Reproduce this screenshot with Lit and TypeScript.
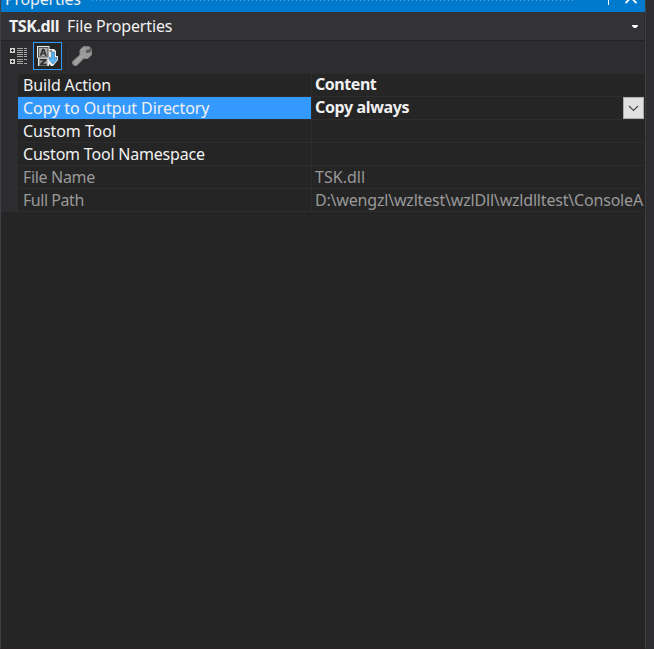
import { LitElement, html, css } from "lit";
import { customElement } from "lit/decorators.js";
import { classMap } from "lit/directives/class-map.js";
import { styleMap } from "lit/directives/style-map.js";

interface Row {
  name: string;
  value: string;
  bold?: boolean;
  selected?: boolean;
  readonly?: boolean;
  tracking: number;
  valueTracking?: number;
}

const rows: Row[] = [
  { name: "Build Action", value: "Content", bold: true, tracking: -0.16, valueTracking: -0.45 },
  { name: "Copy to Output Directory", value: "Copy always", bold: true, selected: true, tracking: -0.07, valueTracking: -0.36 },
  { name: "Custom Tool", value: "", tracking: -0.05 },
  { name: "Custom Tool Namespace", value: "", tracking: -0.2 },
  { name: "File Name", value: "TSK.dll", readonly: true, tracking: -0.33, valueTracking: 0.03 },
  { name: "Full Path", value: "D:\\wengzl\\wzltest\\wzlDll\\wzldlltest\\ConsoleA", readonly: true, tracking: -0.45, valueTracking: -0.19 },
];

const categorizedIcon = html`<svg class="categorized" width="18" height="18" viewBox="0 0 18 18" shape-rendering="crispEdges">
  <path fill="#d4d4d4" d="M0 1h5v5H0zM0 12h5v5H0z"/>
  <path fill="#2d2d30" d="M1 3h3v1H1zM2 2h1v3H2zM1 14h3v1H1zM2 13h1v3H2z"/>
  <path fill="#a6a6a6" d="M7 1h6v1H7zM7 3h6v1H7zM7 5h6v1H7zM7 7h6v1H7zM7 9h6v1H7zM7 12h6v1H7zM7 14h6v1H7zM7 16h6v1H7zM14 1h3v1h-3zM14 3h3v1h-3zM14 5h3v1h-3zM14 7h3v1h-3zM14 9h3v1h-3zM14 12h3v1h-3zM14 16h3v1h-3z"/>
</svg>`;

const alphabeticalIcon = html`<svg width="21" height="21" viewBox="0 0 21 21">
  <path fill="#ececec" d="M0 0h12.5v3H17l2 2v5h2v4l-5 6h-2l-2-2v2H1v-8H0z"/>
  <path fill="#555" d="M1 1h10.5v10.5H1z"/>
  <path fill="#a9a9a9" d="M2 2h8.5v8.5H2z"/>
  <path fill="#303030" fill-rule="evenodd" d="M5.2 2.8h2.1L9.8 9.7H7.9L7.4 8.3H5L4.5 9.7H2.7zM5.5 6.9h1.5l-.8-2.2z"/>
  <path fill="#9a9a9a" d="M2 12.5h8.5V20H2z"/>
  <path fill="#303030" d="M3 13h6.5v1.4l-3.7 3.4h3.9v1.6H2.8V18l3.7-3.4H3z"/>
  <path fill="#252526" d="M12.5 4.5H15v1h-2.5z"/>
  <path fill="#5bb8f5" stroke="#2f7db2" stroke-width=".7" d="M14.6 6h2.8v6.6l2.4-1.4v2.3L16 18l-3.8-4.5v-2.3l2.4 1.4z"/>
</svg>`;

const wrenchIcon = html`<svg class="wrench" width="21" height="21" viewBox="0 0 21 21">
  <path fill="#9b9b9b" stroke="#858585" d="M11.2.7h6l2.3 2.5v5.6l-3.6 3.7h-4.2L4.8 19.5H2.2L.7 18v-2.5L8 8.8V4z"/>
  <path fill="#5c5c5c" d="M14.5 3.5h2L18.5 1.7l1 1.3v2L17 7h-2.5l-1-1.5z"/>
  <path stroke="#b5b5b5" d="M3 16.5L10 10"/>
</svg>`;

@customElement("app-root")
export class AppRoot extends LitElement {
  static styles = css`
    :host { display: block; width: 654px; height: 649px; overflow: hidden; background: #2d2d30; color: #f1f1f1; font: 16px/22px "Noto Sans", "Open Sans", sans-serif; }
    * { box-sizing: border-box; }
    svg { display: block; flex: none; }
    .panel { width: 646px; height: 649px; background: #252526; border-left: 1px solid #3f3f46; border-right: 1px solid #3f3f46; border-bottom: 1px solid #282224; display: flex; flex-direction: column; }
    .title { height: 12px; background: #007acc; display: flex; flex: none; overflow: hidden; padding-left: 4px; }
    .caption { margin-top: -12px; width: 87px; flex: none; white-space: nowrap; letter-spacing: -.2px; }
    .grip { width: 482px; height: 1px; background: repeating-linear-gradient(90deg, #59a8dd 0 1px, transparent 1px 4px); }
    .window-icons { margin-left: 32px; }
    .object { height: 29px; flex: none; background: #333337; border-bottom: 1px solid #222224; border-right: 1px solid #29292b; display: flex; align-items: center; padding: 0 6px 0 8px; }
    .object b { width: 58px; letter-spacing: -.4px; }
    .kind { letter-spacing: -.14px; }
    .caret { margin-left: auto; }
    .tools { height: 33px; background: #2d2d30; border-right: 1px solid #29292b; flex: none; display: flex; padding: 1px 0 0 9px; }
    .categorized { margin-top: 5px; }
    .active { margin-left: 5px; width: 29px; height: 28px; border: 1px solid #3399ff; background: #252526; padding: 3px; }
    .divider { width: 1px; height: 26px; margin: 2px 6px 0 3px; background: #222224; }
    .wrench { margin-top: 4px; }
    .grid { border-left: 17px solid #2d2d30; margin-right: 1px; }
    .row { height: 23px; display: flex; white-space: nowrap; border-bottom: 1px solid #2d2d30; }
    .name { width: 293px; flex: none; padding-left: 5px; }
    .value { flex: 1; min-width: 0; border-left: 1px solid #2d2d30; padding-left: 3px; display: flex; overflow: hidden; }
    .bold { font-weight: 700; }
    .bold .text { margin-top: -1px; }
    .selected .name { background: #3399ff; }
    .readonly { color: #999; }
    .drop { margin-left: auto; width: 21px; height: 22px; background: #e1e1e1; border: 1px solid #adadad; display: grid; place-items: center; }
  `;

  render() {
    return html`<div class="panel">
      <div class="title">
        <span class="caption">Properties</span>
        <div class="grip"></div>
        <svg class="window-icons" width="36" height="6" viewBox="0 0 36 6">
          <path fill="#fff" d="M2 0h1v5H2z"/>
          <path fill="none" stroke="#fff" stroke-width="1.8" d="M19.5 3.2L25 -2.5l5.5 5.7"/>
        </svg>
      </div>
      <div class="object">
        <b>TSK.dll</b><span class="kind">File Properties</span>
        <svg class="caret" width="6" height="3" viewBox="0 0 6 3"><path fill="#fff" d="M0 0h6v1L4 3H2L0 1z"/></svg>
      </div>
      <div class="tools">
        ${categorizedIcon}
        <div class="active">${alphabeticalIcon}</div>
        <div class="divider"></div>
        ${wrenchIcon}
      </div>
      <div class="grid">
        ${rows.map(r => html`<div class=${classMap({ row: true, selected: !!r.selected, readonly: !!r.readonly })}>
          <div class="name" style=${styleMap({ letterSpacing: `${r.tracking}px` })}>${r.name}</div>
          <div class=${classMap({ value: true, bold: !!r.bold })}>
            <span class="text" style=${styleMap({ letterSpacing: `${r.valueTracking ?? 0}px` })}>${r.value}</span>
            ${r.selected ? html`<div class="drop"><svg width="11" height="7" viewBox="0 0 11 7"><path fill="none" stroke="#444" stroke-width="1.1" d="M1 1l4.5 4.5L10 1"/></svg></div>` : ""}
          </div>
        </div>`)}
      </div>
    </div>`;
  }
}
